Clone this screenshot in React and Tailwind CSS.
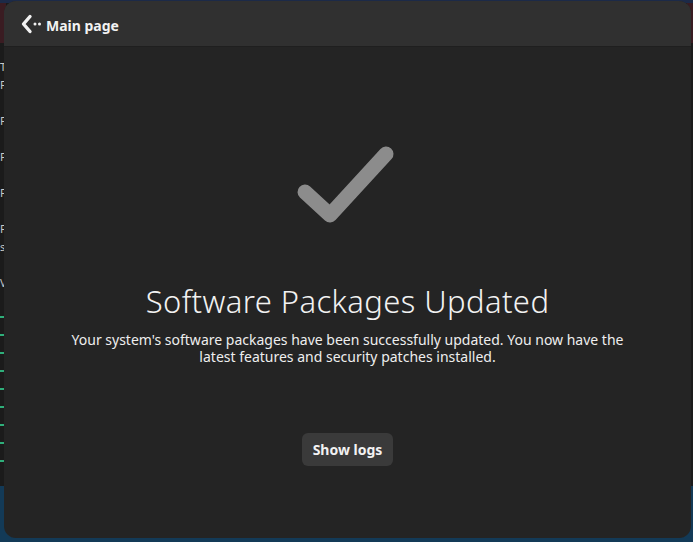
function BackIcon() {
  return (
    <svg width="24" height="20" viewBox="0 0 24 20" fill="none">
      <path d="M10 2.5 L3.5 10 L10 17.5" stroke="#f2f2f2" strokeWidth="3.4" strokeLinecap="round" strokeLinejoin="round" />
      <circle cx="15" cy="10" r="1.5" fill="#f2f2f2" />
      <circle cx="19.5" cy="10" r="1.5" fill="#f2f2f2" />
    </svg>
  )
}

function CheckMark() {
  return (
    <svg width="110" height="90" viewBox="0 0 110 90" fill="none">
      <path d="M12 50 L37 73 L93 12" stroke="#8c8c8c" strokeWidth="15" strokeLinecap="round" strokeLinejoin="round" />
    </svg>
  )
}

export default function App() {
  return (
    <div className="relative w-[693px] h-[542px] overflow-hidden bg-[#1b1b1b]" style={{ fontFamily: '"Noto Sans", "Open Sans", sans-serif' }}>
      {/* desktop behind the dialog */}
      <div className="absolute inset-x-0 top-0 h-[3px] bg-[#1c2a48]" />
      <div className="absolute left-0 top-[3px] w-[6px] h-[40px] bg-[#3a1c22]" />
      <div className="absolute right-0 top-[3px] w-[6px] h-[40px] bg-[#3a1c22]" />
      <div className="absolute inset-x-0 bottom-0 h-[56px] bg-[#133a57]" />
      <div className="absolute left-0 top-[58px] flex flex-col text-[11px] leading-[18px] text-[#c8c8c8]">
        <span>T</span>
        <span>F</span>
        <span className="mt-[18px]">F</span>
        <span className="mt-[18px]">F</span>
        <span className="mt-[18px]">F</span>
        <span className="mt-[18px]">F</span>
        <span>s</span>
        <span className="mt-[18px]">V</span>
      </div>
      <div className="absolute left-0 top-[316px] flex flex-col gap-[16px]">
        {[0, 1, 2, 3, 4, 5, 6, 7, 8].map(i => (
          <div key={i} className="w-[4px] h-[2px] bg-[#2fae7a]" />
        ))}
      </div>

      {/* dialog window */}
      <div className="absolute left-[4px] top-[1px] w-[687px] h-[537px] rounded-[12px] overflow-hidden bg-[#242424] flex flex-col text-[#f2f2f2]">
        <div className="h-[46px] shrink-0 bg-[#303030] border-b border-[#1f1f1f] flex items-center pl-[16px] gap-[2px]">
          <BackIcon />
          <span className="text-[14px] font-bold pt-[3px]">Main page</span>
        </div>

        <div className="flex-1 flex flex-col items-center">
          <div className="mt-[95px]">
            <CheckMark />
          </div>
          <h1 className="mt-[49px] text-[31px] font-light leading-[40px] tracking-[0.4px]">Software Packages Updated</h1>
          <p className="mt-[10px] w-[560px] text-center text-[14px] leading-[17px] text-[#eeeeee]">
            Your system's software packages have been successfully updated. You now have the latest features and security patches installed.
          </p>
          <button className="mt-[68px] h-[33px] px-[11px] rounded-[6px] bg-[#3a3a3a] text-[14px] font-bold text-[#f2f2f2]">
            Show logs
          </button>
        </div>
      </div>
    </div>
  )
}
